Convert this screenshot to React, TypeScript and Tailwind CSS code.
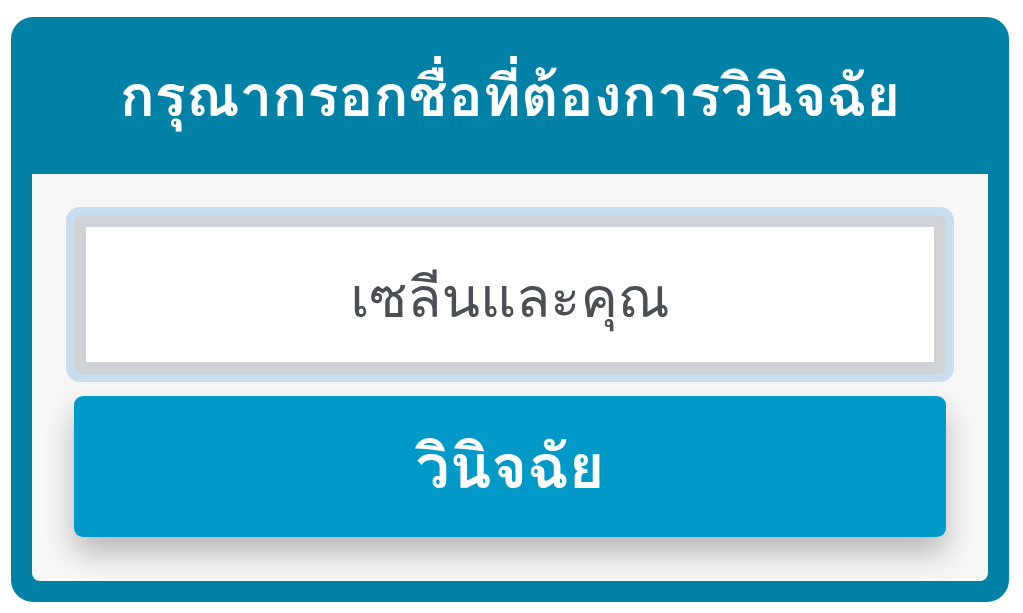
export default function App() {
  return (
    <div className="w-[1023px] h-[613px] bg-white pt-[17px] pl-[11px] font-['Loma','DejaVu_Sans',sans-serif]">
      <div className="w-[998px] h-[585px] rounded-[22px] bg-[#0181a5] px-[21px] pb-[21px] flex flex-col">
        <div className="h-[157px] flex items-center justify-center">
          <h1 className="text-white font-bold text-[58px] leading-none">กรุณากรอกชื่อที่ต้องการวินิจฉัย</h1>
        </div>
        <div className="flex-1 bg-[#f7f7f7] rounded-b-[8px] px-[34px] pt-[33px] flex flex-col">
          <div className="rounded-[14px] bg-[#c9ddf0] p-2">
            <div className="rounded-[8px] bg-[#cfd2d7] p-3">
              <div className="h-[135px] bg-white flex items-center justify-center pt-[6px]">
                <span className="text-[#4a4f56] text-[56px] leading-none">เซลีนและคุณ</span>
              </div>
            </div>
          </div>
          <button className="mt-[14px] mx-2 h-[141px] rounded-[9px] bg-[#0099c8] text-white font-bold text-[61px] leading-none shadow-[0_16px_30px_rgba(0,0,0,0.26)] flex items-center justify-center">
            วินิจฉัย
          </button>
        </div>
      </div>
    </div>
  );
}
